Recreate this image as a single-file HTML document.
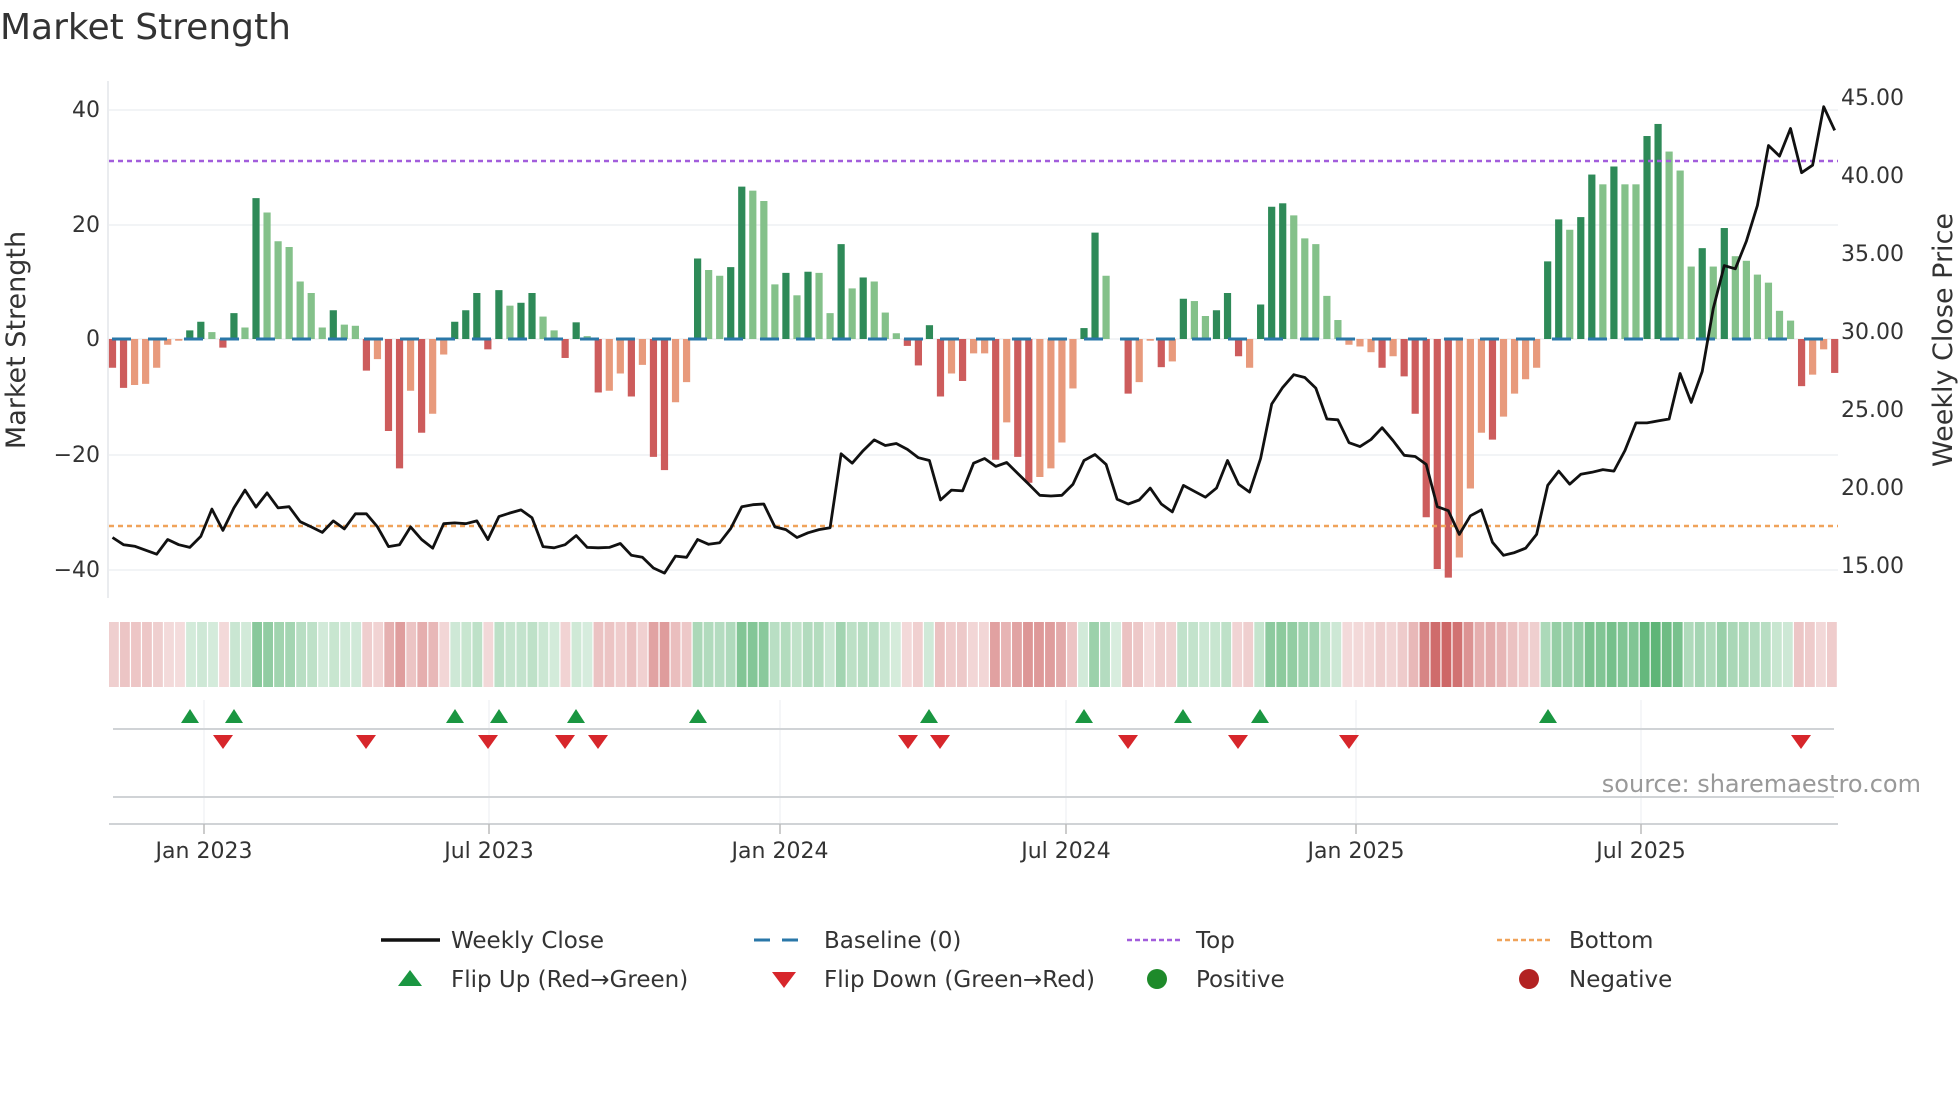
<!DOCTYPE html>
<html><head><meta charset="utf-8"><style>
html,body{margin:0;padding:0;background:#fff;}
svg{display:block;font-family:"DejaVu Sans","Liberation Sans",sans-serif;}
</style></head><body>
<svg id="s" width="1960" height="1102" viewBox="0 0 1960 1102" xmlns="http://www.w3.org/2000/svg">
<rect width="1960" height="1102" fill="#fff"/>
<text x="0" y="39" font-size="36" fill="#333">Market Strength</text>
<g stroke="#eef0f4" stroke-width="1.5">
<line x1="109" x2="1838" y1="110" y2="110"/><line x1="109" x2="1838" y1="225" y2="225"/>
<line x1="109" x2="1838" y1="339" y2="339"/><line x1="109" x2="1838" y1="455" y2="455"/>
<line x1="109" x2="1838" y1="570" y2="570"/>
</g>
<line x1="108" x2="108" y1="81" y2="598" stroke="#e4e6ea" stroke-width="1.5"/>
<g font-size="22" fill="#333" text-anchor="end">
<text x="100" y="117">40</text><text x="100" y="232">20</text><text x="100" y="346">0</text>
<text x="100" y="462">−20</text><text x="100" y="577">−40</text>
</g>
<g font-size="22" fill="#333">
<text x="1841" y="105">45.00</text><text x="1841" y="183">40.00</text><text x="1841" y="261">35.00</text>
<text x="1841" y="339">30.00</text><text x="1841" y="417">25.00</text><text x="1841" y="495">20.00</text>
<text x="1841" y="573">15.00</text>
</g>
<text transform="translate(25,340) rotate(-90)" font-size="27" fill="#333" text-anchor="middle">Market Strength</text>
<text transform="translate(1952,340) rotate(-90)" font-size="27" fill="#333" text-anchor="middle">Weekly Close Price</text>
<g id="bars"></g>
<line x1="112" x2="1838" y1="339" y2="339" stroke="#2a77a8" stroke-width="3" stroke-dasharray="19,17"/>
<line x1="109" x2="1838" y1="161" y2="161" stroke="#a25ddc" stroke-width="2.5" stroke-dasharray="5,4"/>
<line x1="109" x2="1838" y1="526" y2="526" stroke="#f0a35a" stroke-width="2.5" stroke-dasharray="5,4"/>
<polyline id="pl" fill="none" stroke="#111" stroke-width="2.8" stroke-linejoin="round"/>
<g id="heat"></g>
<g stroke="#eef0f4" stroke-width="1.2">
<line x1="204" x2="204" y1="700" y2="825"/><line x1="489" x2="489" y1="700" y2="825"/>
<line x1="780" x2="780" y1="700" y2="825"/><line x1="1066" x2="1066" y1="700" y2="825"/>
<line x1="1356" x2="1356" y1="700" y2="825"/><line x1="1641" x2="1641" y1="700" y2="825"/>
</g>
<line x1="113" x2="1834" y1="729" y2="729" stroke="#d0d3d6" stroke-width="2"/>
<line x1="113" x2="1834" y1="797" y2="797" stroke="#d0d3d6" stroke-width="2"/>
<line x1="109" x2="1838" y1="824" y2="824" stroke="#d0d3d6" stroke-width="2"/>
<g stroke="#bbb" stroke-width="1.5">
<line x1="204" x2="204" y1="824" y2="834"/><line x1="489" x2="489" y1="824" y2="834"/>
<line x1="780" x2="780" y1="824" y2="834"/><line x1="1066" x2="1066" y1="824" y2="834"/>
<line x1="1356" x2="1356" y1="824" y2="834"/><line x1="1641" x2="1641" y1="824" y2="834"/>
</g>
<g id="flips"></g>
<g font-size="22" fill="#333" text-anchor="middle">
<text x="204" y="858">Jan 2023</text><text x="489" y="858">Jul 2023</text><text x="780" y="858">Jan 2024</text>
<text x="1066" y="858">Jul 2024</text><text x="1356" y="858">Jan 2025</text><text x="1641" y="858">Jul 2025</text>
</g>
<text x="1921" y="792" font-size="24" fill="#999" text-anchor="end">source: sharemaestro.com</text>
<g font-size="23" fill="#333">
<line x1="381" x2="440" y1="940" y2="940" stroke="#111" stroke-width="3.5"/>
<text x="451" y="948">Weekly Close</text>
<line x1="754" x2="810" y1="940" y2="940" stroke="#2a77a8" stroke-width="3" stroke-dasharray="16,12"/>
<text x="824" y="948">Baseline (0)</text>
<line x1="1127" x2="1182" y1="940" y2="940" stroke="#a25ddc" stroke-width="2.5" stroke-dasharray="5,3"/>
<text x="1196" y="948">Top</text>
<line x1="1497" x2="1553" y1="940" y2="940" stroke="#f0a35a" stroke-width="2.5" stroke-dasharray="5,3"/>
<text x="1569" y="948">Bottom</text>
<polygon points="398,986 422,986 410,970" fill="#1a9641"/>
<text x="451" y="987">Flip Up (Red→Green)</text>
<polygon points="772,972 796,972 784,988" fill="#d7262b"/>
<text x="824" y="987">Flip Down (Green→Red)</text>
<circle cx="1157" cy="979" r="10" fill="#1e8a2a"/>
<text x="1196" y="987">Positive</text>
<circle cx="1529" cy="979" r="10" fill="#b22222"/>
<text x="1569" y="987">Negative</text>
</g>
</svg>
<script>
var v=[-5,-8.5,-8,-7.8,-5,-1,-0.3,1.5,3,1.2,-1.5,4.5,2,24.5,22,17,16,10,8,2,5,2.5,2.3,-5.5,-3.5,-16,-22.5,-9,-16.3,-13,-2.7,3,5,8,-1.8,8.5,5.8,6.3,8,3.9,1.5,-3.3,2.9,0.5,-9.3,-9,-6,-10,-4.5,-20.5,-22.8,-11,-7.5,14,12,11,12.5,26.5,25.8,24,9.5,11.5,7.6,11.7,11.5,4.5,16.5,8.8,10.7,10,4.6,1,-1.2,-4.6,2.4,-10,-6,-7.3,-2.5,
-2.5,-21,-14.5,-20.5,-25,-24,-22.5,-18,-8.6,1.9,18.5,11,0,-9.5,-7.5,-0.3,-4.9,-3.9,7,6.6,4,5,8,-3,-5,6,23,23.6,21.5,17.5,16.5,7.5,3.3,-1,-1.3,-2.3,-5,-3,-6.5,-13,-31,-40,-41.5,-38,-26,-16.3,-17.5,-13.5,-9.5,-7,-5,13.5,20.8,19,21.2,28.6,26.9,30,26.9,26.9,35.3,37.4,32.6,29.3,12.6,15.8,12.6,19.3,14.4,13.6,11.2,9.8,4.9,3.2,-8.2,-6.2,-1.8,-5.9];
var f="DDLLLLLDDLDDLDLLLLLLDLLDLDDLDLLDDDDDLDDLLDDLDLLDLDDLLDLLDDLLLDLDLLDLDLLLDDDDLDL"+"LDLDDLLLLDDLLDLLDLDLLDDDLDDDLLLLLLLLDLDDDDDLLLDLLLLDDLDDLDLLDDLLLDLDLLLLLLDLLD";
var p=[1360,1378,1382,1392,1402,1365,1378,1385,1357,1288,1342,1285,1240,1283,1247,1285,1282,1320,1333,1347,1318,1338,1300,1300,1333,1383,1378,1333,1365,1387,1325,1323,1325,1318,1365,1307,1298,1290,1310,1383,1386,1378,1355,1385,1386,1385,1375,1405,1410,1437,1450,1407,1410,1365,1377,1373,1337,1282,1277,1275,1333,1340,1360,1348,1340,1335,1148,1172,1140,1113,1127,1122,1137,1158,1165,1265,1240,1242,1172,
1160,1180,1170,1198,1225,1253,1255,1253,1225,1165,1150,1175,1263,1275,1265,1235,1275,1295,1228,1243,1258,1235,1165,1225,1245,1160,1022,980,948,955,982,1060,1062,1120,1130,1112,1082,1115,1152,1155,1175,1282,1292,1352,1305,1290,1372,1405,1398,1387,1352,1228,1192,1225,1200,1195,1188,1192,1140,1070,1070,1065,1060,945,1018,940,780,672,680,610,520,368,395,325,437,418,270,330];
var NS="http://www.w3.org/2000/svg";
function el(t,a,par){var e=document.createElementNS(NS,t);for(var k in a)e.setAttribute(k,a[k]);par.appendChild(e);return e;}
var bars=document.getElementById('bars'),heat=document.getElementById('heat'),pts=[];
var n=v.length,step=(1834.7-112.5)/(n-1),hw=(1838-109)/n;
for(var i=0;i<n;i++){
 var x=112.5+i*step,val=v[i],d=f[i]==='D';
 var col=val>=0?(d?'#2e8a58':'#84c18a'):(d?'#cd5c5c':'#e89a7c');
 var h=Math.abs(val)*5.75,y=val>=0?339-h:339;
 if(h>0.3)el('rect',{x:x-3.6,y:y,width:7.2,height:h,fill:col},bars);
 var a=Math.min(1,0.2+0.7*Math.abs(val)/42);
 var c=val>=0?'rgba(60,165,90,'+a+')':'rgba(195,70,70,'+(a*0.92)+')';
 el('rect',{x:109+i*hw,y:622,width:hw-1.2,height:65,fill:c},heat);
 pts.push(x.toFixed(1)+','+(p[i]/2.53).toFixed(1));
}
document.getElementById('pl').setAttribute('points',pts.join(' '));
var fl=document.getElementById('flips');
[190,234,455,499,576,698,929,1084,1183,1260,1548].forEach(function(x){el('polygon',{points:(x-9)+',723 '+(x+9)+',723 '+x+',709',fill:'#1a9641'},fl);});
[223,366,488,565,598,908,940,1128,1238,1349,1801].forEach(function(x){el('polygon',{points:(x-10)+',735 '+(x+10)+',735 '+x+',749',fill:'#d7262b'},fl);});
</script>
</body></html>
